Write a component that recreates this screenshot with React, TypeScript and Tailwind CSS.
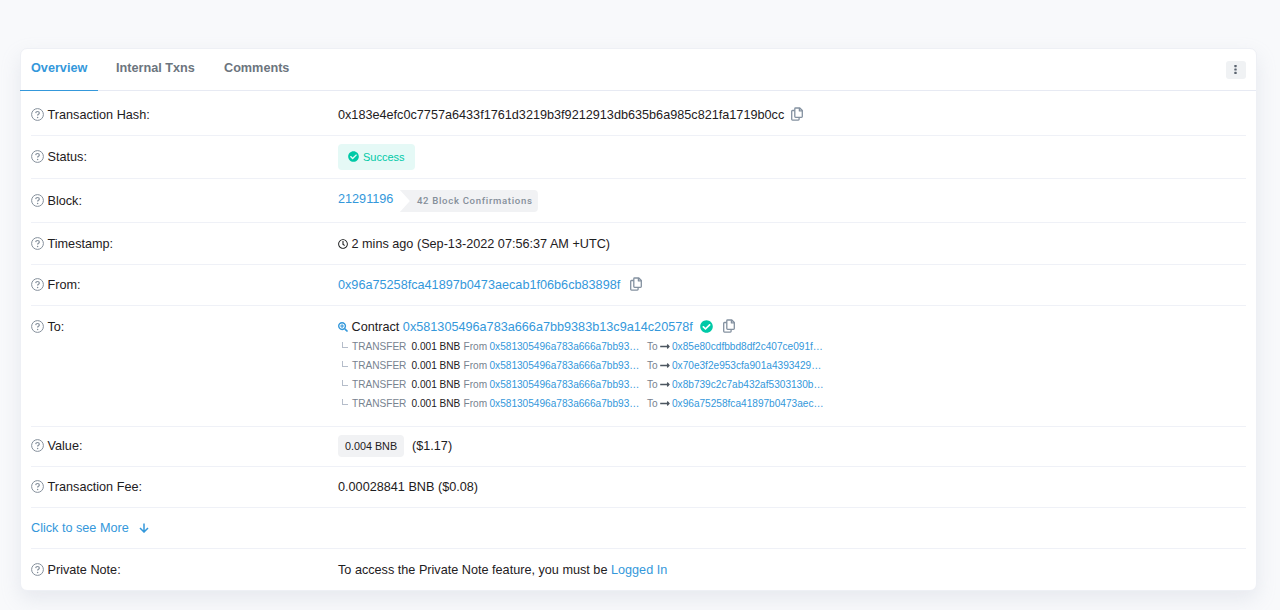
import type { ReactNode } from "react";
import { FaCheckCircle, FaLongArrowAltRight, FaRegClock, FaSearchPlus } from "react-icons/fa";

const transfers = [
  "0x85e80cdfbbd8df2c407ce091f…",
  "0x70e3f2e953cfa901a4393429…",
  "0x8b739c2c7ab432af5303130b…",
  "0x96a75258fca41897b0473aec…",
];

function Row({ label, className, children }: { label: string; className: string; children: ReactNode }) {
  return (
    <div className={`flex border-b border-[#eff1f7] ${className}`}>
      <div className="flex h-5 w-[307px] shrink-0 items-center self-start">
        <svg viewBox="0 0 13 13" className="-mt-px mr-[3.5px] h-[13px] w-[13px] text-[#848f9b]" fill="none" stroke="currentColor">
          <circle cx="6.5" cy="6.5" r="5.9" strokeWidth="1" />
          <path d="M4.7 5.1c.1-1 .8-1.6 1.8-1.6s1.8.6 1.8 1.5c0 1.3-1.7 1.3-1.7 2.6" strokeWidth="1.2" />
          <circle cx="6.6" cy="9.4" r=".75" fill="currentColor" stroke="none" />
        </svg>
        {label}
      </div>
      <div className="min-w-0">{children}</div>
    </div>
  );
}

function Copy({ className }: { className: string }) {
  return (
    <svg viewBox="0 0 12 14" className={`-mt-[2px] h-[14px] w-[12px] text-[#8491a0] ${className}`} fill="none" stroke="currentColor" strokeWidth="1.3" strokeLinejoin="round">
      <path d="M4.6 1h4.2l2.5 2.5v6a.8.8 0 0 1-.8.8H4.6a.8.8 0 0 1-.8-.8V1.8a.8.8 0 0 1 .8-.8z" />
      <path d="M8.4 1v2.9h2.9M3.8 3.5H1.5a.8.8 0 0 0-.8.8v8a.8.8 0 0 0 .8.8h5.8a.8.8 0 0 0 .8-.8v-2" />
    </svg>
  );
}

export default function App() {
  return (
    <div className="h-[610px] overflow-hidden bg-[#f8f9fb] pt-12 pl-5 font-['Liberation_Sans',Arial,sans-serif] text-[12.66px] leading-5 text-[#1e2022]">
      <div className="h-[543px] w-[1236.5px] rounded-[7px] border border-[#eef0f5] bg-white shadow-[0_8px_20px_rgba(160,170,190,0.2)]">
        {/* Tabs */}
        <div className="flex h-[42px] items-start justify-between border-b border-[#e7eaf3] pr-[10px] font-bold text-[#6c757e]">
          <div className="-ml-px flex">
            <a href="#" className="h-[42px] w-[78px] border-b-[1.5px] border-[#3498db] pt-[9px] pl-[11px] text-[#3498db]">
              Overview
            </a>
            <a href="#" className="w-[126px] pt-[9px] pl-[18px]">Internal Txns</a>
            <a href="#" className="pt-[9px]">Comments</a>
          </div>
          <button className="mt-3 flex h-[18px] w-5 items-center justify-center rounded-[3px] bg-[#f0f2f4]">
            <svg viewBox="0 0 3 9" className="-mt-px h-[9px] w-[3px]" fill="#5b6470">
              <rect width="2.4" height="2.2" x=".3" rx=".6" />
              <rect width="2.4" height="2.2" x=".3" y="3.4" rx=".6" />
              <rect width="2.4" height="2.2" x=".3" y="6.8" rx=".6" />
            </svg>
          </button>
        </div>

        <div className="px-[10px]">
          <Row label="Transaction Hash:" className="h-[45px] pt-[14px]">
            <div className="flex items-center">
              0x183e4efc0c7757a6433f1761d3219b3f9212913db635b6a985c821fa1719b0cc
              <Copy className="ml-[7px]" />
            </div>
          </Row>

          <Row label="Status:" className="h-[43px] pt-[11px]">
            <div className="-mt-[3px] flex h-[26px] w-[77px] items-center rounded-[4px] bg-[#e5f9f6] pl-[10px] text-[11px] text-[#00c9a7]">
              <FaCheckCircle className="-mt-px mr-[4px] h-[11px] w-[11px]" />
              Success
            </div>
          </Row>

          <Row label="Block:" className="h-[44px] pt-[12px]">
            <div className="flex">
              <a href="#" className="-mt-[2px] text-[#3498db]">21291196</a>
              <span className="-mt-px ml-[6.5px] h-[22px] w-[138px] rounded-r-[4px] bg-[#f1f2f4] pl-[17px] font-[Roboto,sans-serif] text-[9.6px] leading-[22px] font-medium tracking-[0.68px] whitespace-nowrap text-[#858f9a] [clip-path:polygon(0_0,100%_0,100%_100%,0_100%,10px_50%)]">
                42 Block Confirmations
              </span>
            </div>
          </Row>

          <Row label="Timestamp:" className="h-[42px] pt-[11px]">
            <div className="flex items-center">
              <FaRegClock className="mr-[3.5px] h-[10px] w-[10px]" />
              2 mins ago (Sep-13-2022 07:56:37 AM +UTC)
            </div>
          </Row>

          <Row label="From:" className="h-[41px] pt-[10px]">
            <div className="flex items-center">
              <a href="#" className="text-[#3498db]">0x96a75258fca41897b0473aecab1f06b6cb83898f</a>
              <Copy className="ml-[10px]" />
            </div>
          </Row>

          <Row label="To:" className="h-[121px] pt-[11px]">
            <div className="flex items-center">
              <FaSearchPlus className="mr-[3.5px] h-[10px] w-[10px] text-[#3498db]" />
              Contract&nbsp;
              <a href="#" className="text-[#3498db]">0x581305496a783a666a7bb9383b13c9a14c20578f</a>
              <FaCheckCircle className="-mt-px ml-[7px] h-[13px] w-[13px] text-[#00c9a7]" />
              <Copy className="ml-[10px]" />
            </div>
            <div className="mt-px">
              {transfers.map((to) => (
                <div key={to} className="flex h-[18.8px] items-center pl-[4px] text-[10.1px] text-[#77838f]">
                  <span className="-mt-[4px] mr-[4px] h-[6px] w-[6px] border-b border-l border-[#b5bdca]" />
                  <span className="w-[59.5px]">TRANSFER</span>
                  <span className="w-[52px] text-[#1e2022]">0.001 BNB</span>
                  <span className="w-[26px]">From</span>
                  <a href="#" className="w-[157.5px] text-[#3498db]">0x581305496a783a666a7bb93…</a>
                  <span className="w-[13px]">To</span>
                  <FaLongArrowAltRight className="-mt-px mr-[2px] h-[11px] w-[10px] text-[#4d5760]" />
                  <a href="#" className="text-[#3498db]">{to}</a>
                </div>
              ))}
            </div>
          </Row>

          <Row label="Value:" className="h-[40px] pt-[9px]">
            <div className="flex items-center">
              <span className="-my-1 mr-[8px] h-[22px] w-[66px] rounded-[4px] bg-[#f1f2f4] text-center text-[10.8px] leading-[22px]">
                0.004 BNB
              </span>
              ($1.17)
            </div>
          </Row>

          <Row label="Transaction Fee:" className="h-[41px] pt-[10px]">
            0.00028841 BNB ($0.08)
          </Row>

          <a href="#" className="flex h-[41px] items-start border-b border-[#eff1f7] pt-[10px] text-[#3498db]">
            Click to see More
            <svg viewBox="0 0 10 10" className="mt-[5px] ml-[10px] h-[10px] w-[10px]" fill="none" stroke="currentColor" strokeWidth="1.5">
              <path d="M5 .5v8.3M1 4.9 5 9l4-4.1" />
            </svg>
          </a>

          <Row label="Private Note:" className="h-[41px] border-b-0 pt-[11px]">
            To access the Private Note feature, you must be{" "}
            <a href="#" className="text-[#3498db]">Logged In</a>
          </Row>
        </div>
      </div>
    </div>
  );
}
